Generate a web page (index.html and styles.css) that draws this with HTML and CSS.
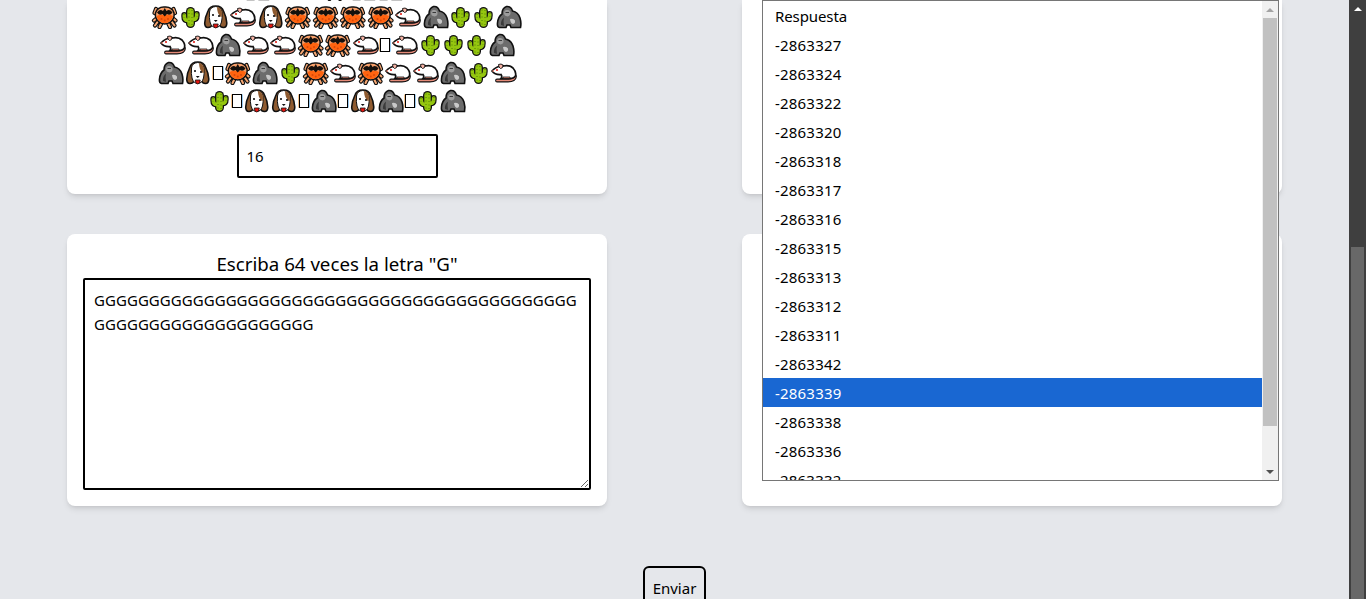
FILE: index.html
```html
<!DOCTYPE html>
<html lang="es">
<head>
<meta charset="utf-8">
<title>Formulario</title>
<link rel="stylesheet" href="styles.css">
</head>
<body>
<svg class="defs" width="0" height="0" aria-hidden="true">
  <symbol id="crab" viewBox="0 0 27.500 24">
    <g fill="none" stroke-linecap="round" stroke-linejoin="round">
      <path stroke="#111" stroke-width="4.200" d="M6 13 L3 15.500 M6.500 17 L4 20.500 M10 19 L8.500 22 M21.500 13 L24.500 15.500 M21 17 L23.500 20.500 M17.500 19 L19 22 M7 9 L3.500 8 L5 4 M20.500 9 L24 8 L22.500 4"/>
      <path stroke="#f8a873" stroke-width="2" d="M6 13 L3 15.500 M6.500 17 L4 20.500 M10 19 L8.500 22 M21.500 13 L24.500 15.500 M21 17 L23.500 20.500 M17.500 19 L19 22 M7 9 L3.500 8 L5 4 M20.500 9 L24 8 L22.500 4"/>
    </g>
    <path fill="#f8a06a" stroke="#111" stroke-width="1.500" d="M13.750 2 Q21 1.500 23 8 Q24 13 20 16.500 Q17 19 13.750 19 Q10.500 19 7.500 16.500 Q3.500 13 4.500 8 Q6.500 1.500 13.750 2Z"/>
    <path fill="#ff6410" d="M5.500 11 Q9 9 13.750 10 Q18.500 9 22 11 Q21 15.500 17 17.500 Q13.750 18.500 10.500 17.500 Q6.500 15.500 5.500 11Z"/>
    <path fill="#15100c" d="M6 7.500 Q9 3.500 12 6 L13.750 3 L15.500 6 Q18.500 3.500 21.500 7.500 Q19 11 16 9 L13.750 11.500 L11.500 9 Q8.500 11 6 7.500Z"/>
    <circle cx="10.500" cy="14" r="1" fill="#d9480a"/><circle cx="17" cy="14" r="1" fill="#d9480a"/><circle cx="13.750" cy="15.500" r="1" fill="#d9480a"/>
  </symbol>
  <symbol id="cactus" viewBox="0 0 23 24">
    <g fill="none" stroke-linecap="round" stroke-linejoin="round">
      <path stroke="#111" stroke-width="9" d="M11.500 6.500 V18.500"/>
      <path stroke="#111" stroke-width="6" d="M5.300 10 V11.500 Q5.300 15.500 9 15.500 H11 M17.700 9 V10.500 Q17.700 14.500 14 14.500 H12"/>
      <path stroke="#95c70f" stroke-width="6.400" d="M11.500 6.500 V18.500"/>
      <path stroke="#95c70f" stroke-width="3.600" d="M5.300 10 V11.500 Q5.300 15.500 9 15.500 H11 M17.700 9 V10.500 Q17.700 14.500 14 14.500 H12"/>
    </g>
    <path stroke="#4f7d06" stroke-width="1" stroke-dasharray="1 2.500" fill="none" d="M10 4.500 V21 M13 5 V21 M5 9 V13 M18 8 V12"/>
  </symbol>
  <symbol id="dog" viewBox="0 0 27.500 24">
    <path fill="#8f5b30" stroke="#111" stroke-width="1.600" d="M13.750 1 Q20 1 21.500 6 Q24.500 12 24.800 18 Q24.800 22.500 21.500 22.500 Q18.500 22.500 17.500 20 L10 20 Q9 22.500 6 22.500 Q2.700 22.500 2.700 18 Q3 12 6 6 Q7.500 1 13.750 1Z"/>
    <path fill="#fff" stroke="#111" stroke-width="1" d="M13.750 1.500 Q19.500 2 20 7 Q20.500 13 19.500 17 Q18 22.500 13.750 22.500 Q9.500 22.500 8 17 Q7 13 7.500 7 Q8 2 13.750 1.500Z"/>
    <path fill="#8f5b30" d="M15 2 Q19.500 2.500 20 8 Q20 10.500 19.500 12.500 Q15 9.500 15 2Z"/>
    <circle cx="11" cy="10" r="1.100" fill="#111"/><circle cx="17" cy="11" r="1.100" fill="#111"/>
    <path fill="#111" d="M11.800 15 H15.700 L13.750 17Z"/>
    <path fill="#e8160f" stroke="#111" stroke-width=".8" d="M11.300 19 H16.200 Q16.200 23 13.750 23 Q11.300 23 11.300 19Z"/>
  </symbol>
  <symbol id="rat" viewBox="0 0 27.500 24">
    <path fill="none" stroke="#111" stroke-width="3.800" stroke-linecap="round" d="M25 15.500 Q24.500 19.500 18 19.500 H7"/>
    <path fill="none" stroke="#e58a78" stroke-width="1.700" stroke-linecap="round" d="M25 15.500 Q24.500 19.500 18 19.500 H7"/>
    <path fill="#fff" stroke="#111" stroke-width="1.700" d="M2 10 Q6 6 9 5.500 Q11 3 13.500 5 Q19 3.500 23 7 Q26.500 11 25.500 14.500 Q24.500 17.500 20 17.500 H11 Q12.500 15.500 11 13.500 Q5 14 2 10Z"/>
    <path fill="#f6b3a5" stroke="#111" stroke-width=".9" d="M8.500 3.500 Q11.500 2 13 4.500 Q13 7.500 10.500 7.500 Q8.500 6.500 8.500 3.500Z"/>
    <circle cx="7" cy="9" r="1.100" fill="#e3211a"/>
    <path fill="#ef8a78" d="M1.500 10 L4 9 L4 11Z"/>
    <path fill="#e58a78" stroke="#111" stroke-width=".8" d="M13 16 H20 V17.500 H13Z"/>
  </symbol>
  <symbol id="gorilla" viewBox="0 0 27.500 24">
    <path fill="#6c6c6c" stroke="#111" stroke-width="1.600" d="M4.500 22.500 Q2 22 2.500 18 Q3 12 7 9 Q7 3 11.500 1.500 Q16 1 17.500 6 Q23 7 25 13 Q26.500 18 25.500 22.500 H16 L15 20 H12 L11 22.500Z"/>
    <path fill="#9d9d9d" d="M9 8 Q9.500 4.500 12 5 Q15 4.500 15.500 7.500 Q16 11 12.500 11.500 Q9 11 9 8Z"/>
    <path fill="#c9c9c9" d="M15 14 Q18.500 13 20 15.500 Q20.500 18.500 18 19 Q15.500 18.500 15 14Z"/>
    <path fill="#3a3a3a" d="M6 20 Q5.500 15 9 12.500 Q8 16 9 21Z M10.500 7 H14 V8 H10.500Z"/>
  </symbol>
</svg>

<div class="page">
  <main class="content">
    <div class="grid">
      <section class="card card-top">
        <div class="emoji-row row-clipped">
          <span class="g wide"><svg><use href="#gorilla"/></svg></span><span class="g"><svg><use href="#cactus"/></svg></span><span class="g wide"><svg><use href="#rat"/></svg></span><span class="g wide"><svg><use href="#crab"/></svg></span><span class="g wide"><svg><use href="#gorilla"/></svg></span><span class="g wide"><svg><use href="#gorilla"/></svg></span><span class="g wide"><svg><use href="#rat"/></svg></span>
        </div>
        <div class="emoji-row">
          <span class="g wide"><svg><use href="#crab"/></svg></span><span class="g"><svg><use href="#cactus"/></svg></span><span class="g wide"><svg><use href="#dog"/></svg></span><span class="g wide"><svg><use href="#rat"/></svg></span><span class="g wide"><svg><use href="#dog"/></svg></span><span class="g wide"><svg><use href="#crab"/></svg></span><span class="g wide"><svg><use href="#crab"/></svg></span><span class="g wide"><svg><use href="#crab"/></svg></span><span class="g wide"><svg><use href="#crab"/></svg></span><span class="g wide"><svg><use href="#rat"/></svg></span><span class="g wide"><svg><use href="#gorilla"/></svg></span><span class="g"><svg><use href="#cactus"/></svg></span><span class="g"><svg><use href="#cactus"/></svg></span><span class="g wide"><svg><use href="#gorilla"/></svg></span>
        </div>
        <div class="emoji-row">
          <span class="g wide"><svg><use href="#rat"/></svg></span><span class="g wide"><svg><use href="#rat"/></svg></span><span class="g wide"><svg><use href="#gorilla"/></svg></span><span class="g wide"><svg><use href="#rat"/></svg></span><span class="g wide"><svg><use href="#rat"/></svg></span><span class="g wide"><svg><use href="#crab"/></svg></span><span class="g wide"><svg><use href="#crab"/></svg></span><span class="g wide"><svg><use href="#rat"/></svg></span><span class="tofu"></span><span class="g wide"><svg><use href="#rat"/></svg></span><span class="g"><svg><use href="#cactus"/></svg></span><span class="g"><svg><use href="#cactus"/></svg></span><span class="g"><svg><use href="#cactus"/></svg></span><span class="g wide"><svg><use href="#gorilla"/></svg></span>
        </div>
        <div class="emoji-row">
          <span class="g wide"><svg><use href="#gorilla"/></svg></span><span class="g wide"><svg><use href="#dog"/></svg></span><span class="tofu"></span><span class="g wide"><svg><use href="#crab"/></svg></span><span class="g wide"><svg><use href="#gorilla"/></svg></span><span class="g"><svg><use href="#cactus"/></svg></span><span class="g wide"><svg><use href="#crab"/></svg></span><span class="g wide"><svg><use href="#rat"/></svg></span><span class="g wide"><svg><use href="#crab"/></svg></span><span class="g wide"><svg><use href="#rat"/></svg></span><span class="g wide"><svg><use href="#rat"/></svg></span><span class="g wide"><svg><use href="#gorilla"/></svg></span><span class="g"><svg><use href="#cactus"/></svg></span><span class="g wide"><svg><use href="#rat"/></svg></span>
        </div>
        <div class="emoji-row">
          <span class="g"><svg><use href="#cactus"/></svg></span><span class="tofu"></span><span class="g wide"><svg><use href="#dog"/></svg></span><span class="g wide"><svg><use href="#dog"/></svg></span><span class="tofu"></span><span class="g wide"><svg><use href="#gorilla"/></svg></span><span class="tofu"></span><span class="g wide"><svg><use href="#dog"/></svg></span><span class="g wide"><svg><use href="#gorilla"/></svg></span><span class="tofu"></span><span class="g"><svg><use href="#cactus"/></svg></span><span class="g wide"><svg><use href="#gorilla"/></svg></span>
        </div>
        <input class="answer" type="text" value="16">
      </section>

      <div class="right-top">
        <section class="card card-top"></section>
        <div class="listbox">
          <ul class="options">
            <li class="placeholder">Respuesta</li>
            <li>-2863327</li>
            <li>-2863324</li>
            <li>-2863322</li>
            <li>-2863320</li>
            <li>-2863318</li>
            <li>-2863317</li>
            <li>-2863316</li>
            <li>-2863315</li>
            <li>-2863313</li>
            <li>-2863312</li>
            <li>-2863311</li>
            <li>-2863342</li>
            <li class="selected">-2863339</li>
            <li>-2863338</li>
            <li>-2863336</li>
            <li>-2863332</li>
          </ul>
          <div class="list-scroll">
            <span class="arrow-up"></span>
            <span class="list-track"><span class="list-thumb"></span></span>
            <span class="arrow-down"></span>
          </div>
        </div>
      </div>

      <section class="card card-bottom">
        <h2 class="title">Escriba 64 veces la letra "G"</h2>
        <textarea class="long-answer">GGGGGGGGGGGGGGGGGGGGGGGGGGGGGGGGGGGGGGGGGGGGGGGGGGGGGGGGGGGGGGGG</textarea>
      </section>
      <section class="card card-bottom"></section>
    </div>
    <div class="actions"><button class="submit" type="button">Enviar</button></div>
  </main>
  <div class="page-scroll">
    <span class="page-arrow"></span>
    <span class="page-thumb"></span>
  </div>
</div>
</body>
</html>
```
FILE: styles.css
```css
* { box-sizing: border-box; }
html, body { margin: 0; height: 100%; overflow: hidden; }
body {
  background: #e5e7eb;
  color: #000;
  font-family: "Noto Sans", "Open Sans", sans-serif;
  font-size: 15px;
}
.defs { position: absolute; }
.page { display: flex; height: 599px; overflow: hidden; }
.content { flex: 1; min-width: 0; overflow: hidden; }
.grid {
  display: grid;
  grid-template-columns: 540px 540px;
  grid-template-rows: 194px 272px;
  column-gap: 135px;
  row-gap: 40px;
  margin-left: 67px;
}
.card {
  background: #fff;
  box-shadow: 0 4px 6px -1px rgba(0,0,0,.1), 0 2px 4px -2px rgba(0,0,0,.1);
}
.card-top {
  height: 194px;
  border-radius: 0 0 8px 8px;
  display: flex;
  flex-direction: column;
  align-items: center;
  justify-content: flex-end;
  overflow: hidden;
  padding-bottom: 16px;
}
.card-bottom {
  border-radius: 8px;
  padding: 16px;
  display: flex;
  flex-direction: column;
}
.emoji-row {
  display: flex;
  justify-content: center;
  align-items: center;
  height: 28px;
  flex: none;
}
.g { display: block; width: 23px; height: 24px; flex: none; }
.g.wide { width: 27.5px; }
.g svg { display: block; width: 100%; height: 100%; }
.tofu {
  display: block;
  flex: none;
  width: 10px;
  height: 14px;
  margin: 0 1px;
  border: 1px solid #000;
  box-shadow: -1px 0 0 -0.4px #e8973f, 1px 0 0 -0.4px #5aa9e6;
}
.answer {
  display: block;
  flex: none;
  width: 201px;
  height: 44px;
  margin-top: 19px;
  border: 2px solid #000;
  border-radius: 2px;
  padding: 0 8px;
  font: inherit;
  color: #000;
  background: #fff;
  outline: none;
}
.right-top { position: relative; height: 194px; }
.listbox {
  position: absolute;
  z-index: 2;
  top: 0;
  left: 20px;
  width: 517px;
  height: 481px;
  display: flex;
  background: #fff;
  border: 1px solid #767676;
}
.options {
  flex: 1;
  min-width: 0;
  margin: 0;
  padding: 0;
  list-style: none;
  overflow: hidden;
}
.options li {
  height: 29px;
  line-height: 30px;
  padding-left: 12px;
  white-space: nowrap;
  letter-spacing: .2px;
}
.options li.placeholder { letter-spacing: -.1px; }
.options li.selected { background: #1967d2; color: #fff; }
.list-scroll {
  flex: none;
  width: 16px;
  background: #f0f0f0;
  display: flex;
  flex-direction: column;
  align-items: center;
}
.arrow-up, .arrow-down {
  flex: none;
  width: 0;
  height: 0;
  border-left: 4px solid transparent;
  border-right: 4px solid transparent;
}
.arrow-up { border-bottom: 4px solid #a3a3a3; margin: 7px 0 6px; }
.arrow-down { border-top: 4px solid #505050; margin: 6px 0 6px; }
.list-track { flex: 1; width: 100%; padding: 0 1px; }
.list-thumb { display: block; width: 100%; height: 408px; background: #c1c1c1; }
.title {
  margin: 0;
  height: 28px;
  line-height: 28px;
  font-size: 18.7px;
  font-weight: 400;
  text-align: center;
}
.long-answer {
  flex: 1;
  display: block;
  width: 100%;
  border: 2px solid #000;
  border-radius: 2px;
  padding: 8px 8px 8px 9px;
  font: inherit;
  line-height: 24px;
  letter-spacing: .05px;
  color: #000;
  background: #fff;
  outline: none;
  resize: both;
}
.actions { display: flex; justify-content: center; padding-top: 60px; }
.submit {
  width: 63px;
  height: 44px;
  border: 2px solid #000;
  border-radius: 6px;
  background: transparent;
  font: inherit;
  color: #000;
  padding: 0;
}
.page-scroll {
  flex: none;
  width: 17px;
  height: 599px;
  background: #3f3f3f;
  display: flex;
  flex-direction: column;
  align-items: center;
}
.page-arrow {
  flex: none;
  width: 0;
  height: 0;
  border-left: 4px solid transparent;
  border-right: 4px solid transparent;
  border-bottom: 4px solid #fff;
  margin-top: 7px;
}
.page-thumb {
  flex: none;
  width: 13px;
  height: 352px;
  margin-top: 236px;
  background: #686868;
}
```
